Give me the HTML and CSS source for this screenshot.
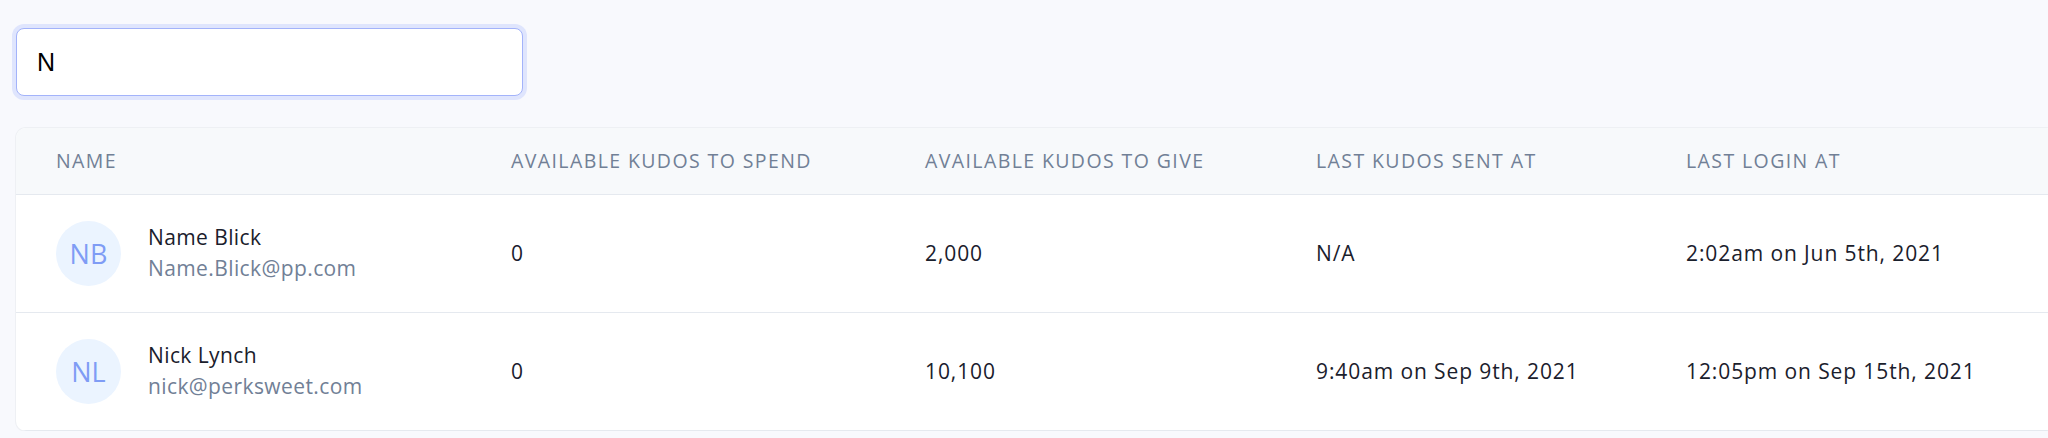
FILE: index.html
```html
<!DOCTYPE html>
<html lang="en">
<head>
<meta charset="utf-8">
<title>Users</title>
<link rel="stylesheet" href="styles.css">
</head>
<body>
<div class="page">
  <div class="search">
    <input class="search-input" type="text" value="N">
  </div>
  <div class="card">
    <table class="users">
      <colgroup>
        <col class="c-name">
        <col class="c-spend">
        <col class="c-give">
        <col class="c-sent">
        <col class="c-login">
      </colgroup>
      <thead>
        <tr>
          <th>Name</th>
          <th>Available Kudos to Spend</th>
          <th>Available Kudos to Give</th>
          <th>Last Kudos Sent At</th>
          <th>Last Login At</th>
        </tr>
      </thead>
      <tbody>
        <tr>
          <td>
            <div class="user">
              <div class="avatar">NB</div>
              <div class="user-info">
                <div class="user-name">Name Blick</div>
                <div class="user-email">Name.Blick@pp.com</div>
              </div>
            </div>
          </td>
          <td>0</td>
          <td>2,000</td>
          <td>N/A</td>
          <td>2:02am on Jun 5th, 2021</td>
        </tr>
        <tr>
          <td>
            <div class="user">
              <div class="avatar">NL</div>
              <div class="user-info">
                <div class="user-name">Nick Lynch</div>
                <div class="user-email">nick@perksweet.com</div>
              </div>
            </div>
          </td>
          <td>0</td>
          <td>10,100</td>
          <td>9:40am on Sep 9th, 2021</td>
          <td>12:05pm on Sep 15th, 2021</td>
        </tr>
      </tbody>
    </table>
  </div>
</div>
</body>
</html>
```

FILE: styles.css
```css
* { box-sizing: border-box; }

html, body {
  margin: 0;
  padding: 0;
  background: #f8f9fd;
  font-family: "Open Sans", "Noto Sans", sans-serif;
  color: #1a202c;
}

.page {
  padding: 28px 0 0 16px;
  width: 2048px;
}

.search-input {
  display: block;
  width: 507px;
  height: 68px;
  padding: 0 20px;
  border: 1px solid #a3b3fa;
  border-radius: 8px;
  background: #fff;
  box-shadow: 0 0 0 4px #dfe5fd;
  font-family: "Liberation Sans", Arial, sans-serif;
  font-size: 25px;
  color: #000;
  outline: none;
}

.card {
  margin-top: 32px;
  width: 2040px;
  background: #fff;
  border-radius: 10px;
  overflow: hidden;
  box-shadow: 0 0 0 1px #eef0f4, 0 1px 2px rgba(0,0,0,0.03);
}

.users {
  width: 100%;
  border-collapse: collapse;
  table-layout: fixed;
}

.c-name { width: 455px; }
.c-spend { width: 414px; }
.c-give { width: 391px; }
.c-sent { width: 370px; }

.users th {
  height: 66px;
  padding: 0 0 0 40px;
  background: #f7f9fb;
  text-align: left;
  font-weight: 400;
  font-size: 19.5px;
  letter-spacing: 1.4px;
  text-transform: uppercase;
  color: #718096;
  border-bottom: 1px solid #e5e9ef;
  white-space: nowrap;
}

.users td {
  height: 118px;
  padding: 0 0 0 40px;
  font-size: 21px;
  letter-spacing: 0.9px;
  color: #1a202c;
  border-bottom: 1px solid #e5e9ef;
  white-space: nowrap;
  vertical-align: middle;
}

.user {
  display: flex;
  align-items: center;
  gap: 27px;
}

.avatar {
  width: 65px;
  height: 65px;
  border-radius: 50%;
  background: #ebf4ff;
  color: #7f9cf5;
  display: flex;
  align-items: center;
  justify-content: center;
  font-size: 27px;
  letter-spacing: 0;
  flex-shrink: 0;
}

.user-info {
  display: flex;
  flex-direction: column;
}

.user-name {
  font-size: 21px;
  line-height: 30px;
  letter-spacing: 0.4px;
  color: #1a202c;
}

.user-email {
  font-size: 21px;
  line-height: 32px;
  letter-spacing: 0.4px;
  color: #718096;
}
```
